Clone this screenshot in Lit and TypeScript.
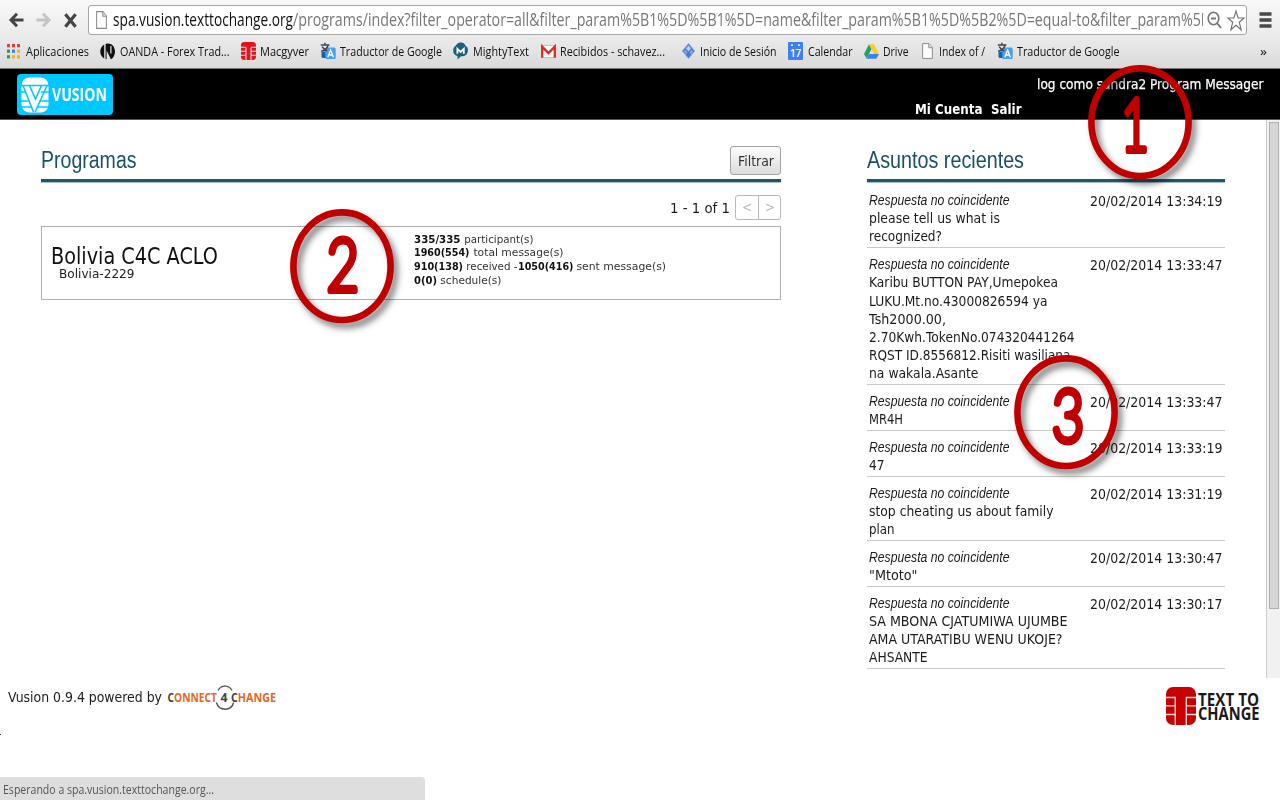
import { LitElement, html, css, svg } from "lit";
import { customElement, property } from "lit/decorators.js";

/* A single line of text scaled horizontally to an exact width. */
@customElement("fit-text")
class FitText extends LitElement {
  @property({ type: Number }) w = 0;

  static styles = css`
    :host {
      display: block;
      flex: none;
      white-space: pre;
    }
    .line {
      display: inline-block;
      vertical-align: top;
      white-space: pre;
      transform-origin: 0 50%;
    }
  `;

  updated() {
    const line = this.renderRoot.querySelector(".line") as HTMLElement;
    this.style.width = `${this.w}px`;
    line.style.transform = "none";
    const full = line.getBoundingClientRect().width;
    if (full) line.style.transform = `scaleX(${this.w / full})`;
  }

  render() {
    return html`<span class="line"><slot></slot></span>`;
  }
}

/* Red numbered ring drawn over the page. */
@customElement("step-marker")
class StepMarker extends LitElement {
  @property() n = "1";
  @property({ type: Number }) dx = 0;
  @property({ type: Number }) dy = 0;
  @property({ type: Number }) sx = 0.75;

  static styles = css`
    :host {
      display: grid;
      width: 120px;
      height: 130px;
    }
    .ring,
    .flat {
      display: block;
      grid-area: 1 / 1;
    }
    .ring {
      filter: drop-shadow(4px 5px 3px rgba(0, 0, 0, 0.5));
    }
    .digit {
      font-family: Lato, "Liberation Sans", sans-serif;
      font-weight: 300;
      font-size: 72px;
      fill: #c00000;
      stroke: #c00000;
      stroke-width: 6px;
      stroke-linejoin: round;
      stroke-linecap: round;
    }
  `;

  render() {
    return html`
      <svg class="ring" width="120" height="130">
        <ellipse cx="52" cy="57.2" rx="48.6" ry="53.8" fill="none" stroke="#c00000" stroke-width="6.6" />
      </svg>
      <svg class="flat" width="120" height="130">
        <text class="digit" text-anchor="middle" transform="translate(${this.dx} ${this.dy}) scale(${this.sx} 1)">${this.n}</text>
      </svg>
    `;
  }
}

const doc = (w: number, h: number) => svg`
  <svg width=${w} height=${h} viewBox="0 0 11 17" preserveAspectRatio="none">
    <path d="M.6 .6H7L10.4 4.6V16.4H.6Z" fill="#fbfbfb" stroke="#8a8a8a" />
    <path d="M6.8 .8V5H10.3" fill="#e4e4e4" stroke="#8a8a8a" />
  </svg>`;

const translate = svg`
  <svg width="16" height="18" viewBox="0 0 16 18">
    <path d="M1.5 9.5H7V16H3Q1.5 16 1.5 14.5Z" fill="#1c5ea8" />
    <rect x="5.3" y="5.5" width="10.4" height="11.5" rx="1.5" fill="#45a0ee" />
    <path d="M.8 3H9.4M4.9 .8V3M8 3.4C7 6.4 4.2 8.4 1.2 9.2M2.2 4.6C3.4 6.8 5 8 7 9" fill="none" stroke="#3c4650" stroke-width="1.5" />
    <path d="M7.8 15.3L10.6 8L13.4 15.3M8.8 13H12.4" fill="none" stroke="#fff" stroke-width="1.3" />
  </svg>`;

const icons: Record<string, unknown> = {
  apps: svg`
    <svg width="13" height="16" viewBox="0 0 13 16">
      <path d="M0 1H3V4.2H0ZM5 1H8V4.2H5ZM10 1H13V4.2H10Z" fill="#ea3a35" />
      <path d="M0 6.6H3V9.8H0Z" fill="#2a9d50" /><path d="M5 6.6H8V9.8H5Z" fill="#3b7ff0" />
      <path d="M10 6.6H13V9.8H10Z" fill="#f5b21a" /><path d="M0 12.2H3V15.4H0Z" fill="#2a9d50" />
      <path d="M5 12.2H8V15.4H5ZM10 12.2H13V15.4H10Z" fill="#f5b21a" />
    </svg>`,
  oanda: svg`
    <svg width="14" height="17" viewBox="0 0 14 17">
      <path d="M3.2 1.6A8 8 0 0 0 3.2 15.4Z" fill="#111" />
      <path d="M4.6 .9C10.6 -1 14 4 14 8.5S10.8 16.6 9.9 16.2L5.6 7.5V16.3L4.6 16Z" fill="#111" />
      <path d="M9.9 3V10.5" stroke="#e6e6e6" stroke-width="1.2" />
    </svg>`,
  ttc: svg`
    <svg width="15" height="18" viewBox="0 0 30 38" preserveAspectRatio="none">
      <rect width="30" height="38" rx="7" fill="#e0141c" />
      <path d="M0 11H10V38M30 11H20V38M0 19.5H10M30 19.5H20M0 28H10M30 28H20" fill="none" stroke="#f2e9e9" stroke-width="2" />
    </svg>`,
  translate,
  mighty: svg`
    <svg width="15" height="18" viewBox="0 0 15 18">
      <path d="M3 3.5C4 1 6 .2 8 .5C11 .5 12 2.4 12.6 4C15 5 15.4 8 14.6 10C14 13.4 11.5 14.4 8 14.3L4.6 17.6L4.4 14C1.5 13.5 0 11.5 .2 8.6C.2 6 1.4 4.4 3 3.5Z" fill="#1c5f7e" />
      <path d="M4.4 11.8V6.8L7.6 10L10.8 6.8V11.8" fill="none" stroke="#fff" stroke-width="1.8" />
    </svg>`,
  gmail: svg`
    <svg width="15" height="13" viewBox="0 0 15 13">
      <rect x=".4" y=".4" width="14.2" height="12.2" fill="#fafafa" stroke="#d8a09c" stroke-width=".7" />
      <path d="M1.2 12.8V1.6L7.5 8L13.8 1.6V12.8" fill="none" stroke="#dd2b24" stroke-width="2.3" />
    </svg>`,
  diamond: svg`
    <svg width="13" height="16" viewBox="0 0 13 16">
      <path d="M6.5 .5L12.7 8L6.5 15.5L.3 8Z" fill="#4a78cc" stroke="#8fa9dc" />
      <path d="M6.5 2.6L9 5.6L6.5 8.6L4 5.6Z" fill="#b9cdf4" />
      <path d="M3.4 6.6L5.6 9.3L3.9 11.2L1.8 8.4ZM9.6 6.6L11.2 8.4L9.1 11.2L7.4 9.3Z" fill="#86a6e4" />
    </svg>`,
  calendar: svg`
    <svg width="15" height="18" viewBox="0 0 15 18">
      <rect width="15" height="18" rx="1" fill="#3f7ff2" />
      <path d="M3 3.2H5M10 3.2H12" stroke="#dfe9ff" stroke-width="1.8" />
      <text x="7.6" y="14.6" text-anchor="middle" font-family="Open Sans, sans-serif" font-size="10" font-weight="600" fill="#fff">17</text>
    </svg>`,
  drive: svg`
    <svg width="15" height="15" viewBox="0 0 15 15">
      <path d="M5 .2L7.6 5L2.6 14.6L0 10Z" fill="#1fa463" />
      <path d="M5 .2H10L15 10H10Z" fill="#fbcb2e" /><path d="M5 10H15L12.4 14.8H2.6Z" fill="#3b7ff0" />
    </svg>`,
  doc: doc(11, 16),
};

/* left = space before the icon, gap = space between icon and label */
const bookmarks = [
  { icon: "apps", left: 7, gap: 6, w: 63, label: "Aplicaciones" },
  { icon: "oanda", left: 12, gap: 5, w: 109.5, label: "OANDA - Forex Trad..." },
  { icon: "ttc", left: 11.5, gap: 4, w: 49, label: "Macgyver" },
  { icon: "translate", left: 11, gap: 4, w: 102, label: "Traductor de Google" },
  { icon: "mighty", left: 11, gap: 5, w: 56, label: "MightyText" },
  { icon: "gmail", left: 11.5, gap: 4, w: 105, label: "Recibidos - schavez..." },
  { icon: "diamond", left: 17, gap: 5.5, w: 76.5, label: "Inicio de Sesión" },
  { icon: "calendar", left: 11.5, gap: 4.5, w: 44.5, label: "Calendar" },
  { icon: "drive", left: 11.5, gap: 4, w: 25.5, label: "Drive" },
  { icon: "doc", left: 14, gap: 6, w: 46, label: "Index of /" },
  { icon: "translate", left: 11.5, gap: 4, w: 102.5, label: "Traductor de Google" },
];

const issues: { time: string; lines: [string, number][] }[] = [
  { time: "20/02/2014 13:34:19", lines: [["please tell us what is", 131], ["recognized?", 73]] },
  {
    time: "20/02/2014 13:33:47",
    lines: [
      ["Karibu BUTTON PAY,Umepokea", 189],
      ["LUKU.Mt.no.43000826594 ya", 178.5],
      ["Tsh2000.00,", 77],
      ["2.70Kwh.TokenNo.074320441264", 205.5],
      ["RQST ID.8556812.Risiti wasiliana", 201.5],
      ["na wakala.Asante", 109.5],
    ],
  },
  { time: "20/02/2014 13:33:47", lines: [["MR4H", 34]] },
  { time: "20/02/2014 13:33:19", lines: [["47", 15.5]] },
  { time: "20/02/2014 13:31:19", lines: [["stop cheating us about family", 184.5], ["plan", 25.5]] },
  { time: "20/02/2014 13:30:47", lines: [['"Mtoto"', 48.5]] },
  {
    time: "20/02/2014 13:30:17",
    lines: [["SA MBONA CJATUMIWA UJUMBE", 198.5], ["AMA UTARATIBU WENU UKOJE?", 193.5], ["AHSANTE", 58.5]],
  },
];

const stats: [string, number, boolean][][] = [
  [["335/335", 46.5, true], [" participant(s)", 72.5, false]],
  [["1960(554)", 55.5, true], [" total message(s)", 93.5, false]],
  [["910(138)", 49, true], [" received -", 54.5, false], ["1050(416)", 55.5, true], [" sent message(s)", 93, false]],
  [["0(0)", 23, true], [" schedule(s)", 64.5, false]],
];

@customElement("app-root")
class AppRoot extends LitElement {
  static styles = css`
    :host {
      display: flex;
      flex-direction: column;
      position: relative;
      width: 1280px;
      height: 800px;
      overflow: hidden;
      background: #fff;
      color: #1c1c1c;
      font-family: "DejaVu Sans", sans-serif;
      font-size: 14px;
    }
    svg {
      display: block;
      flex: none;
      overflow: visible;
    }
    .browser {
      box-sizing: border-box;
      height: 69px;
      flex: none;
      padding-top: 5px;
      border-bottom: 1px solid #777;
      background: linear-gradient(#f8f8f8, #e9e9e9 40px, #dadada);
      font-family: "Open Sans", sans-serif;
      color: #111;
    }
    .nav {
      display: flex;
      align-items: center;
      height: 30px;
    }
    .back { margin-left: 9px; }
    .fwd { margin-left: 12px; }
    .stop { margin-left: 13px; }
    .address {
      box-sizing: border-box;
      display: flex;
      align-items: center;
      width: 1159px;
      height: 30px;
      margin-left: 11px;
      padding-left: 6.5px;
      border: 1px solid #a6a6a6;
      border-radius: 3px;
      background: #fff;
    }
    .url {
      display: flex;
      width: 1090px;
      margin-left: 6px;
      overflow: hidden;
      font-size: 17.5px;
      line-height: 27px;
      align-self: flex-start;
    }
    .path { color: #777; }
    .lens { margin-left: 4px; }
    .star { margin-left: 5px; }
    .menu { margin-left: 12px; }
    .bookmarks {
      display: flex;
      align-items: center;
      height: 32px;
      font-size: 13.5px;
      line-height: 18px;
    }
    .bookmark {
      display: flex;
      align-items: center;
    }
    .more { margin-left: 141px; }

    .header {
      box-sizing: border-box;
      display: flex;
      flex: none;
      height: 51px;
      padding: 5px 17px;
      border-bottom: 1px solid #555;
      background: #000;
      color: #fff;
    }
    .logo {
      display: flex;
      align-items: center;
      width: 95.5px;
      height: 41px;
      border-radius: 4px;
      background: #00c8ff;
      font: 700 17.5px/38px "Open Sans", sans-serif;
    }
    .logo svg { margin: 0 3.5px 0 3.5px; }
    .logo fit-text { margin-top: -2px; }
    .account {
      display: flex;
      flex-direction: column;
      width: 348.5px;
      margin-left: auto;
      line-height: 20px;
      gap: 5px;
    }
    .who {
      align-self: flex-end;
      -webkit-text-stroke: 0.25px #fff;
    }
    .links {
      display: flex;
      gap: 8.5px;
      font-weight: 700;
    }

    .main {
      display: flex;
      flex: none;
      height: 558px;
    }
    .programs {
      width: 740px;
      margin-left: 41px;
    }
    .recent {
      width: 358px;
      margin-left: 86px;
    }
    .head {
      box-sizing: border-box;
      display: flex;
      justify-content: space-between;
      align-items: flex-start;
      height: 62px;
      padding-top: 26px;
      border-bottom: 3px solid #1b5a6c;
      box-shadow: 0 1px 0 #a5bec6;
      color: #1b5262;
      font: 23px/29px "Liberation Sans", sans-serif;
    }
    .filter {
      box-sizing: border-box;
      display: flex;
      justify-content: center;
      width: 51px;
      height: 29px;
      border: 1px solid #a3a3a3;
      border-radius: 3px;
      background: linear-gradient(#fdfdfd, #dcdcdc);
      color: #333;
      font: 14px/28px "DejaVu Sans", sans-serif;
    }
    .pager {
      display: flex;
      justify-content: flex-end;
      height: 25px;
      margin-top: 13px;
      line-height: 26px;
    }
    .pages {
      box-sizing: border-box;
      display: grid;
      grid-template-columns: 1fr 1fr;
      width: 46px;
      margin-left: 5px;
      border: 1px solid #b9b9b9;
      border-radius: 3px;
      color: #b9b9b9;
      line-height: 23px;
    }
    .page {
      display: flex;
      justify-content: center;
    }
    .page + .page { border-left: 1px solid #b9b9b9; }
    .card {
      box-sizing: border-box;
      display: flex;
      height: 74px;
      margin-top: 6px;
      padding-left: 9px;
      border: 1px solid #b0b0b0;
    }
    .program {
      width: 363px;
      padding-top: 18px;
    }
    .name {
      color: #111;
      font-size: 23px;
      line-height: 23px;
    }
    .code {
      margin-left: 8px;
      font-size: 13px;
      line-height: 11px;
      color: #222;
    }
    .stats {
      padding-top: 5.7px;
      font-size: 11.3px;
      line-height: 13.7px;
    }
    .stat { display: flex; }
    .strong { font-weight: 700; color: #111; }
    .soft { color: #333; }

    .issues { padding-top: 2px; }
    .issue {
      display: flex;
      justify-content: space-between;
      padding: 7px 3px 1.5px 2px;
      border-bottom: 1px solid #c9c9c9;
      line-height: 18.2px;
    }
    .kind {
      font: italic 15px/18.2px "Liberation Sans", sans-serif;
    }
    .time { padding-top: 1.2px; }

    .scroll {
      box-sizing: border-box;
      width: 14px;
      margin-left: auto;
      padding: 2px 1px 0 2px;
      border-left: 1px solid #ccc;
      background: #f1f1f1;
    }
    .thumb {
      box-sizing: border-box;
      width: 10px;
      height: 487px;
      border: 1px solid #b0b0b0;
      background: #d6d6d6;
    }

    .footer {
      display: flex;
      flex: none;
      height: 56px;
      padding: 9px 20px 0 8px;
      box-sizing: border-box;
      line-height: 20px;
    }
    .c4c { margin: -4px 0 0 4px; }
    .brand { margin: -1px 0 0 auto; }
    .tick {
      width: 1px;
      height: 1px;
      background: #2a1a8a;
    }
    .status {
      position: absolute;
      left: 0;
      bottom: 0;
      box-sizing: border-box;
      width: 425px;
      height: 23px;
      padding-left: 3px;
      border-radius: 0 4px 0 0;
      background: #dedede;
      color: #555;
      font: 13px/25px "Open Sans", sans-serif;
    }
    .m1, .m2, .m3 { position: absolute; }
    .m1 { left: 1088px; top: 64.5px; }
    .m2 { left: 290px; top: 209px; }
    .m3 { left: 1013.5px; top: 355px; }
  `;

  render() {
    return html`
      <div class="browser">
        <div class="nav">
          <svg class="back" width="15" height="16" viewBox="0 0 15 16">
            <path d="M14.5 8H2.5M8 1.8L2 8L8 14.2" fill="none" stroke="#444" stroke-width="3" />
          </svg>
          <svg class="fwd" width="15" height="16" viewBox="0 0 15 16">
            <path d="M.5 8H12.5M7 1.8L13 8L7 14.2" fill="none" stroke="#c4c4c4" stroke-width="3" />
          </svg>
          <svg class="stop" width="13" height="15" viewBox="0 0 13 15">
            <path d="M1.4 1.2L11.6 13.8M11.6 1.2L1.4 13.8" stroke="#444" stroke-width="3.2" />
          </svg>
          <div class="address">
            ${doc(11, 18)}
            <div class="url">
              <fit-text .w=${180}>spa.vusion.texttochange.org</fit-text>
              <fit-text class="path" .w=${917}>/programs/index?filter_operator=all&amp;filter_param%5B1%5D%5B1%5D=name&amp;filter_param%5B1%5D%5B2%5D=equal-to&amp;filter_param%5B</fit-text>
            </div>
            <svg class="lens" width="15" height="18" viewBox="0 0 15 18">
              <ellipse cx="6.5" cy="7.5" rx="5.3" ry="6.2" fill="none" stroke="#777" stroke-width="1.6" />
              <path d="M4 7.5H9M10.2 12.2L14 17" stroke="#777" stroke-width="1.8" />
            </svg>
            <svg class="star" width="18" height="21" viewBox="0 0 18 21">
              <path d="M9 1.1L11.1 8H17L12.3 12.2L14.1 19.7L9 15.2L3.9 19.7L5.7 12.2L1 8H6.9Z" fill="#fff" stroke="#777" stroke-width="1.2" />
            </svg>
          </div>
          <svg class="menu" width="13" height="16" viewBox="0 0 13 16">
            <path d="M.5 2H12.5M.5 8H12.5M.5 14H12.5" stroke="#484848" stroke-width="3.4" />
          </svg>
        </div>
        <div class="bookmarks">
          ${bookmarks.map(
            (b) => html`<div class="bookmark" style="margin-left:${b.left}px;gap:${b.gap}px">
              ${icons[b.icon]}<fit-text .w=${b.w}>${b.label}</fit-text>
            </div>`
          )}
          <fit-text class="more" .w=${7}>»</fit-text>
        </div>
      </div>

      <div class="header">
        <div class="logo">
          <svg width="28" height="36" viewBox="0 0 28 36">
            <rect x=".5" y=".5" width="27" height="35" rx="8" fill="#fff" />
            <path d="M0 8.5H28M0 15H5M20 15H28M0 24H8M18 24H28M0 30H10M17 30H28" stroke="#00c8ff" stroke-width="1.3" />
            <path d="M2 8.5L12.5 35M26 8.5L14.2 35M8.5 8.5L14.5 22L20.5 8.5" fill="none" stroke="#00c8ff" stroke-width="1.6" />
          </svg>
          <fit-text .w=${55}>VUSION</fit-text>
        </div>
        <div class="account">
          <fit-text class="who" .w=${226.5}>log como sandra2 Program Messager</fit-text>
          <div class="links">
            <fit-text .w=${67.5}>Mi Cuenta</fit-text>
            <fit-text .w=${30.5}>Salir</fit-text>
          </div>
        </div>
      </div>

      <div class="main">
        <div class="programs">
          <div class="head">
            <fit-text .w=${95.5}>Programas</fit-text>
            <div class="filter"><fit-text .w=${36}>Filtrar</fit-text></div>
          </div>
          <div class="pager">
            <fit-text .w=${60}>1 - 1 of 1</fit-text>
            <div class="pages">
              <div class="page"><fit-text .w=${10}>&lt;</fit-text></div>
              <div class="page"><fit-text .w=${10}>&gt;</fit-text></div>
            </div>
          </div>
          <div class="card">
            <div class="program">
              <fit-text class="name" .w=${167}>Bolivia C4C ACLO</fit-text>
              <fit-text class="code" .w=${75.5}>Bolivia-2229</fit-text>
            </div>
            <div class="stats">
              ${stats.map(
                (row) => html`<div class="stat">${row.map(
                  ([t, w, bold]) => html`<fit-text class=${bold ? "strong" : "soft"} .w=${w}>${t}</fit-text>`
                )}</div>`
              )}
            </div>
          </div>
        </div>

        <div class="recent">
          <div class="head"><fit-text .w=${157}>Asuntos recientes</fit-text></div>
          <div class="issues">
            ${issues.map(
              (i) => html`<div class="issue">
                <div>
                  <fit-text class="kind" .w=${140.5}>Respuesta no coincidente</fit-text>
                  ${i.lines.map(([t, w]) => html`<fit-text .w=${w}>${t}</fit-text>`)}
                </div>
                <fit-text class="time" .w=${132.5}>${i.time}</fit-text>
              </div>`
            )}
          </div>
        </div>

        <div class="scroll"><div class="thumb"></div></div>
      </div>

      <div class="footer">
        <fit-text .w=${154}>Vusion 0.9.4 powered by</fit-text>
        <svg class="c4c" width="112" height="28" viewBox="0 0 112 28" font-family="Open Sans, sans-serif" font-weight="700" font-size="13">
          <text x="1.5" y="18.7" textLength="49.5" lengthAdjust="spacingAndGlyphs" fill="#e06a1c"><tspan fill="#444">C</tspan>ONNECT</text>
          <text x="54.5" y="18.7" textLength="7" lengthAdjust="spacingAndGlyphs" fill="#444">4</text>
          <text x="65" y="18.7" textLength="45" lengthAdjust="spacingAndGlyphs" fill="#e06a1c"><tspan fill="#444">C</tspan>HANGE</text>
          <path d="M52 7.5C55 1.6 63 1.6 66 7.5M50.4 19.5C53 28.4 65.5 28.4 67.6 19.5" fill="none" stroke="#555" stroke-width="1.4" />
        </svg>
        <svg class="brand" width="95" height="40" viewBox="0 0 95 40" font-family="Open Sans, sans-serif" font-weight="700" font-size="18.5" fill="#1a1a1a">
          <rect x="1" y="1" width="30" height="38" rx="7" fill="#c80000" />
          <path d="M1 11.5H10.2V39M31 11.5H21.3V39M1 19.8H10.2M31 19.8H21.3M1 28.5H10.2M31 28.5H21.3" fill="none" stroke="#f3dcdc" stroke-width="1.3" />
          <text x="33" y="19.5" textLength="61" lengthAdjust="spacingAndGlyphs">TEXT TO</text>
          <text x="33" y="34.3" textLength="61.5" lengthAdjust="spacingAndGlyphs">CHANGE</text>
        </svg>
      </div>
      <div class="tick"></div>

      <div class="status"><fit-text .w=${211}>Esperando a spa.vusion.texttochange.org...</fit-text></div>

      <step-marker class="m1" .n=${"1"} .dx=${47} .dy=${85.5} .sx=${0.66}></step-marker>
      <step-marker class="m2" .n=${"2"} .dx=${52.7} .dy=${82} .sx=${0.78}></step-marker>
      <step-marker class="m3" .n=${"3"} .dx=${54} .dy=${86.5} .sx=${0.78}></step-marker>
    `;
  }
}
